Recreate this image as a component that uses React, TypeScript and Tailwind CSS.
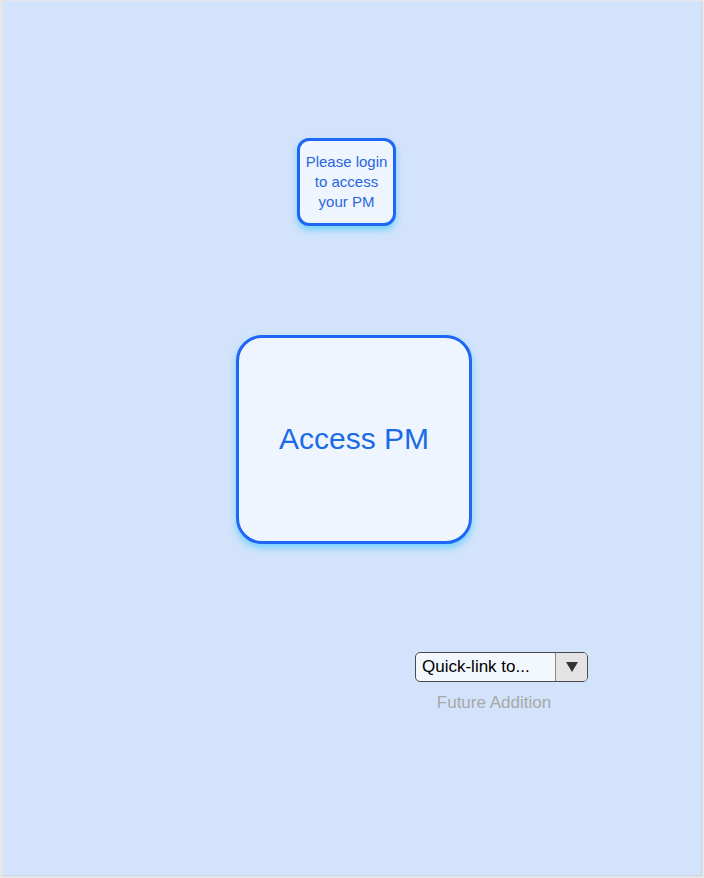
export default function App() {
  return (
    <div className="w-[704px] h-[878px] bg-[#e6e6e6] pt-[1px] pl-[3px]" style={{ fontFamily: '"Liberation Sans", Arial, sans-serif' }}>
      <div className="w-[699px] h-[875px] bg-[#d2e3fb] border-b border-r border-[#c9d6ea] flex flex-col">
        <div className="mt-[137px] ml-[294px] w-[99px] h-[88px] rounded-[12px] border-[3px] border-[#1f66f5] bg-[#eef5fe] shadow-[0_4px_6px_rgba(0,190,255,0.45)] flex items-center justify-center text-center text-[15px] leading-[20px] text-[#2866e0]">
          <span>
            Please login
            <br />
            to access
            <br />
            your PM
          </span>
        </div>
        <div className="mt-[109px] ml-[233px] w-[236px] h-[209px] rounded-[26px] border-[3px] border-[#1f66f5] bg-[#eef5fe] shadow-[0_4px_7px_rgba(0,190,255,0.45)] flex items-center justify-center pb-[3px]">
          <span className="text-[30px] text-[#1b6be6]">Access PM</span>
        </div>
        <div className="mt-[108px] ml-[412px] flex flex-col items-center w-[173px]">
          <div className="w-[173px] h-[30px] rounded-[5px] border border-[#4a4a4a] bg-[#f3f8ff] flex overflow-hidden">
            <div className="flex-1 flex items-center pl-[6px] text-[17px] text-black">Quick-link to...</div>
            <div className="w-[32px] border-l border-[#8a8a8a] bg-[#e4e4e4] flex items-center justify-center">
              <svg width="12" height="10" viewBox="0 0 12 10">
                <path d="M0 0 L12 0 L6 10 Z" fill="#333" />
              </svg>
            </div>
          </div>
          <div className="mt-[8px] mr-[15px] text-[17px] text-[#a8a8a8]">Future Addition</div>
        </div>
      </div>
    </div>
  );
}
